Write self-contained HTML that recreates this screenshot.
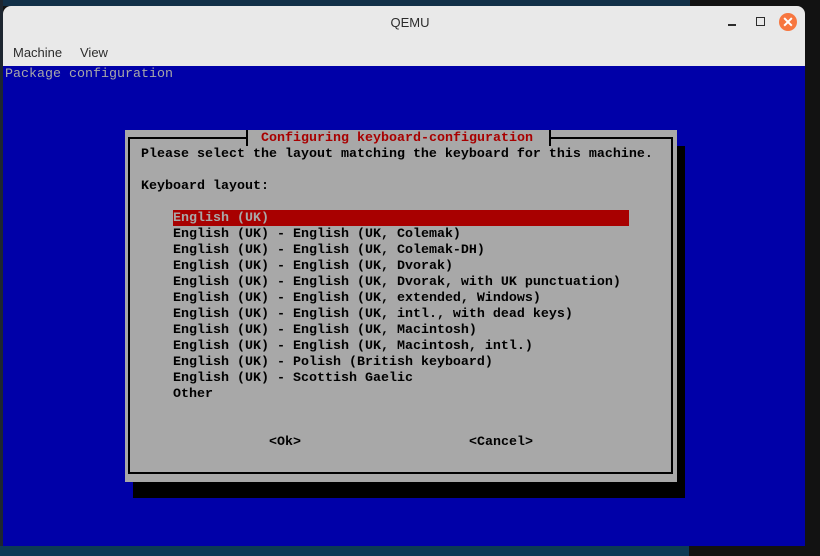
<!DOCTYPE html>
<html><head><meta charset="utf-8"><style>
*{margin:0;padding:0;box-sizing:border-box}
body{width:820px;height:556px;position:relative;overflow:hidden;background:#121212;font-family:"Liberation Sans",sans-serif}
.abs{position:absolute}
.t{position:absolute;font-family:"Liberation Mono","DejaVu Sans Mono",monospace;font-size:13.33px;line-height:16px;white-space:pre;font-weight:bold;color:#000;margin-top:1px}
</style></head><body>
<div class="abs" style="left:0;top:0;width:690px;height:6px;background:#123048"></div>
<div class="abs" style="left:0;top:546px;width:689px;height:10px;background:#0c3a55"></div>
<div class="abs" style="left:0;top:0;width:3px;height:546px;background:#1d2630"></div>
<div class="abs" style="left:3px;top:6px;width:802px;height:60px;background:#e9e9e9;border-radius:8px 8px 0 0"></div>
<div class="abs" style="left:0;top:15px;width:820px;text-align:center;font-size:13px;color:#2c2c2c">QEMU</div>
<div class="abs" style="left:13px;top:45px;font-size:13px;color:#2c2c2c">Machine</div>
<div class="abs" style="left:80px;top:45px;font-size:13px;color:#2c2c2c">View</div>
<div class="abs" style="left:728px;top:24px;width:8px;height:1.5px;background:#2c2c2c"></div>
<div class="abs" style="left:756px;top:17px;width:9px;height:9px;border:1.5px solid #2c2c2c"></div>
<div class="abs" style="left:779px;top:13px;width:18px;height:18px;border-radius:50%;background:#f7763f;color:#fff;font-size:14px;font-weight:bold;text-align:center;line-height:18px">✕</div>
<div class="abs" style="left:3px;top:66px;width:802px;height:480px;background:#0000a8"></div>
<div class="t" style="left:5px;top:66px;color:#a8a8a8;font-weight:normal">Package configuration</div>
<div class="abs" style="left:133px;top:146px;width:552px;height:352px;background:#000"></div>
<div class="abs" style="left:125px;top:130px;width:552px;height:352px;background:#a8a8a8"></div>
<div class="abs" style="left:128px;top:137px;width:545px;height:337px;border:2px solid #000"></div>
<div class="abs" style="left:246px;top:130px;width:305px;height:16px;background:#a8a8a8;border-left:2px solid #000;border-right:2px solid #000"></div>
<div class="t" style="left:253px;top:130px;color:#a80000"> Configuring keyboard-configuration </div>
<div class="t" style="left:141px;top:146px">Please select the layout matching the keyboard for this machine.</div>
<div class="t" style="left:141px;top:178px">Keyboard layout:</div>
<div class="abs" style="left:173px;top:210px;width:456px;height:16px;background:#a80000"></div>
<div class="t" style="left:173px;top:210px;color:#a8a8a8">English (UK)</div>
<div class="t" style="left:173px;top:226px">English (UK) - English (UK, Colemak)
English (UK) - English (UK, Colemak-DH)
English (UK) - English (UK, Dvorak)
English (UK) - English (UK, Dvorak, with UK punctuation)
English (UK) - English (UK, extended, Windows)
English (UK) - English (UK, intl., with dead keys)
English (UK) - English (UK, Macintosh)
English (UK) - English (UK, Macintosh, intl.)
English (UK) - Polish (British keyboard)
English (UK) - Scottish Gaelic
Other</div>
<div class="t" style="left:269px;top:434px">&lt;Ok&gt;</div>
<div class="t" style="left:469px;top:434px">&lt;Cancel&gt;</div>
</body></html>
